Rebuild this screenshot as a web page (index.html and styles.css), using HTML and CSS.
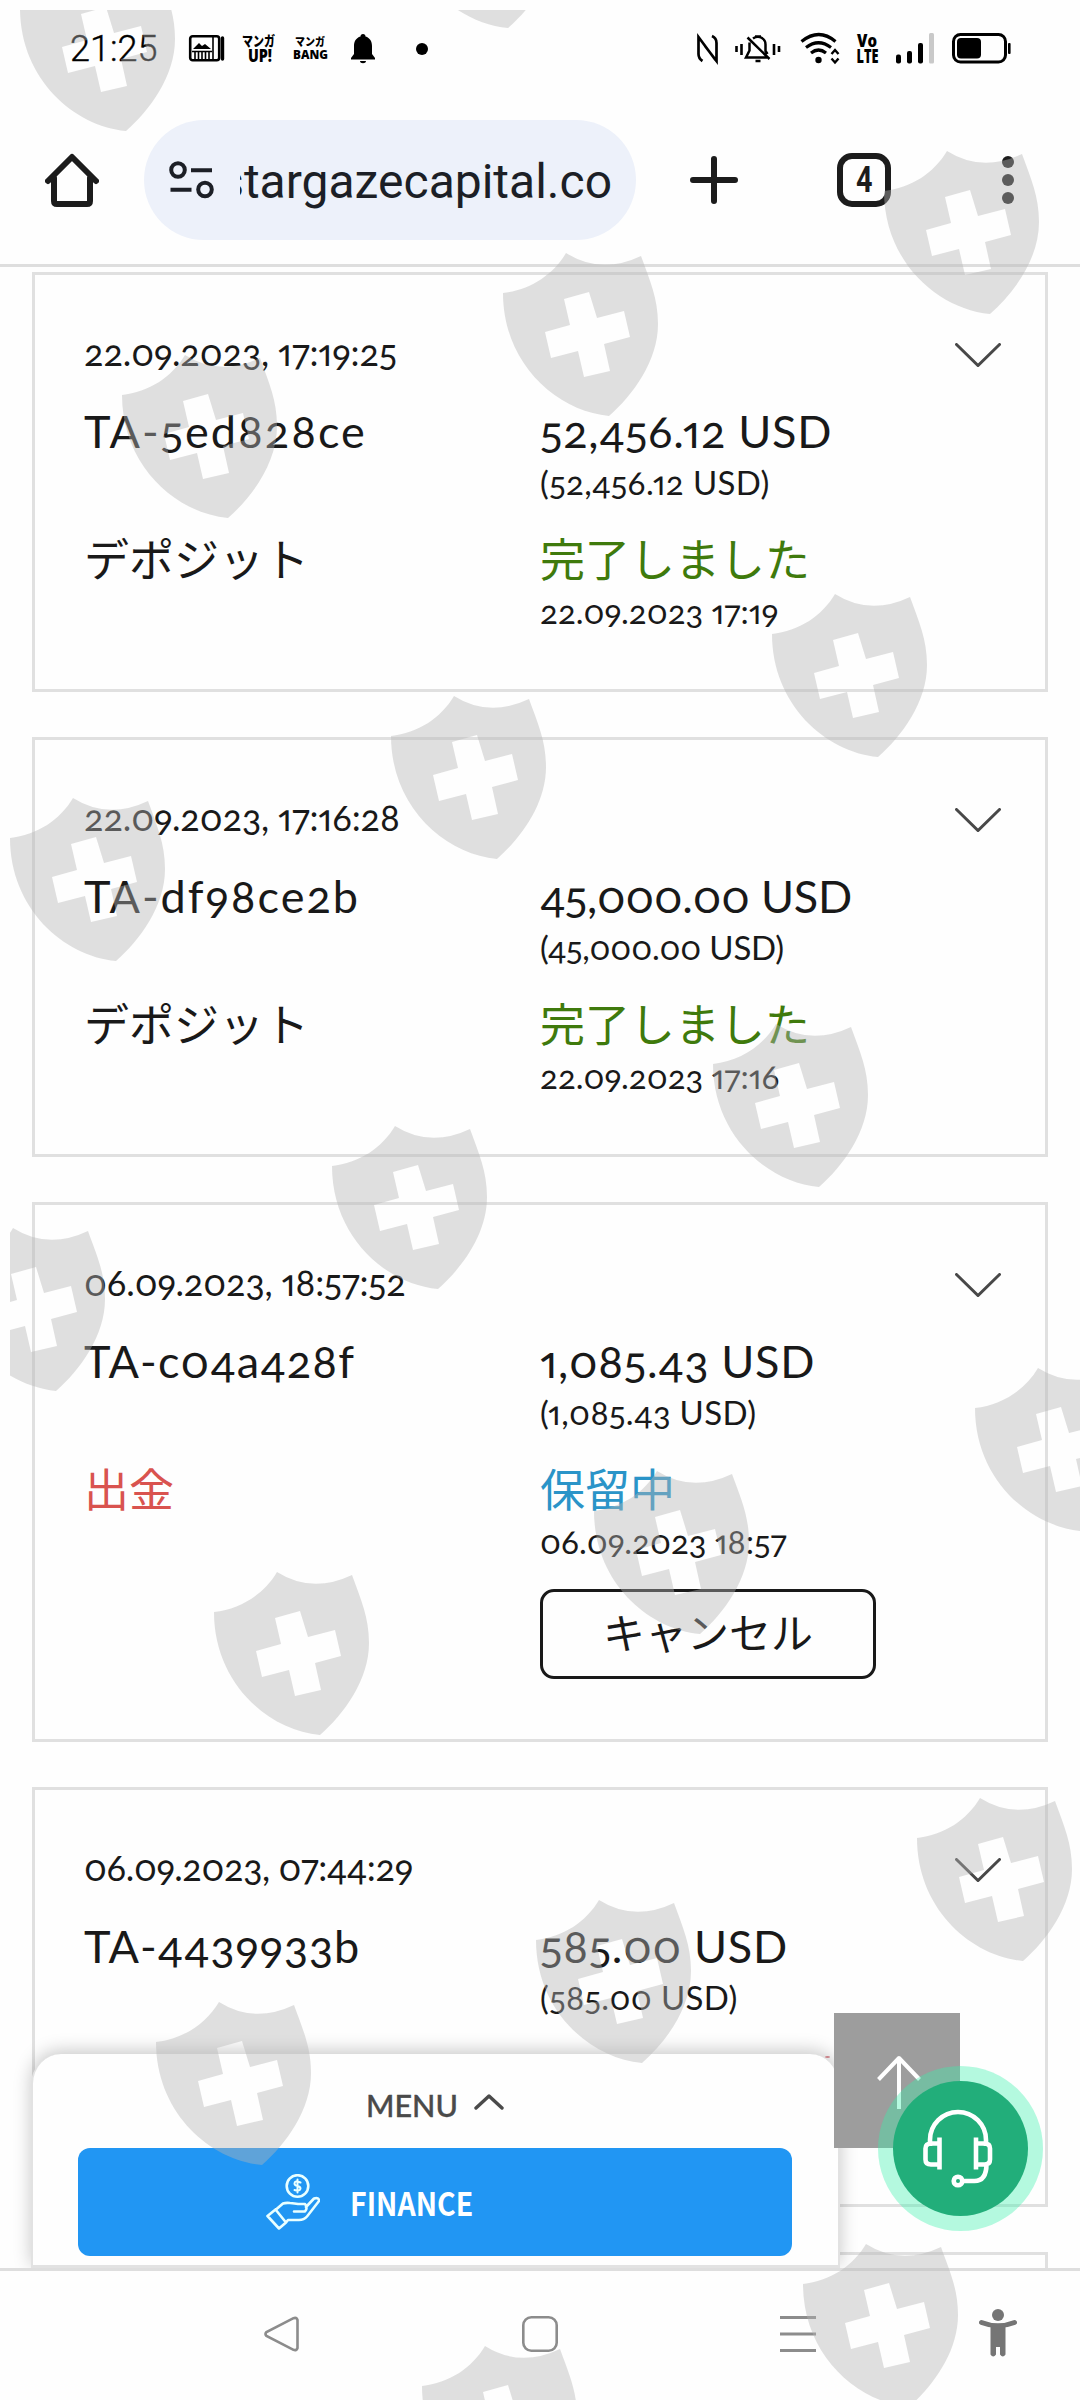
FILE: index.html
```html
<!DOCTYPE html>
<html lang="ja">
<head>
<meta charset="utf-8">
<title>Transactions</title>
<link rel="stylesheet" href="styles.css">
</head>
<body>
<div class="screen">
  <header class="status">
    <span class="clock">21:25</span>
    <svg class="st-news" width="36" height="27" viewBox="0 0 36 27"><rect x="1.2" y="1.2" width="29" height="24" rx="2.5" fill="none" stroke="#000" stroke-width="2.6"/><path d="M24 1v24" stroke="#000" stroke-width="1.6"/><path d="M33.5 3v21" stroke="#000" stroke-width="3.4" stroke-linecap="round"/><path d="M4 14l6-6 3 3 3-2 6 5z"/><path d="M3 16.500h20M6 17v7M9.500 17v7M13 17v7M16.500 17v7M20 17v7" stroke="#000" stroke-width="1.6"/></svg>
    <svg class="st-up" width="34" height="30" viewBox="0 0 34 30"><text class="jp-mini" x="0" y="12" textLength="33" lengthAdjust="spacingAndGlyphs" font-size="14">マンガ</text><text class="lat-mini" x="6" y="28" textLength="24" lengthAdjust="spacingAndGlyphs" font-size="17">UP!</text></svg>
    <svg class="st-bang" width="35" height="26" viewBox="0 0 35 26"><text class="jp-mini" x="2" y="10" textLength="30" lengthAdjust="spacingAndGlyphs" font-size="11">マンガ</text><text class="lat-mini" x="0" y="23" textLength="35" lengthAdjust="spacingAndGlyphs" font-size="12.500">BANG</text></svg>
    <svg class="st-bell" width="24" height="30" viewBox="0 0 24 30"><path d="M12 0c1.600 0 2.500 1 2.500 2.600C19 4 21 7.500 21 12v8l3 4v1.500H0V24l3-4v-8c0-4.500 2-8 6.500-9.400C9.500 1 10.400 0 12 0zM9 27h6c0 3-6 3-6 0z"/></svg>
    <span class="st-dot"></span>
    <svg class="st-nfc" width="22" height="29" viewBox="0 0 22 29" fill="none" stroke="#000" stroke-width="2.700"><path d="M6.500 27Q2.500 24.500 2.500 20V3l17 23M16 2q4.500 2 4.500 7v18L9 12"/></svg>
    <svg class="st-vib" width="46" height="30" viewBox="0 0 46 30" fill="none" stroke="#000" stroke-width="2.500"><path d="M1.500 12v6M6.500 10v11M39 10v11M44 12v6" stroke-width="2.600"/><path d="M14.500 8.500v8L11 23.500h21M18 4.500c6-4 12.500 0 12.500 6V17l2 3M12.500 3.500l22 21.500M20 2.500h6M20.500 27h5"/></svg>
    <svg class="st-wifi" width="42" height="31" viewBox="0 0 42 31" fill="none" stroke="#000" stroke-width="3.200"><path d="M1.500 8.500q17.500-14 34 0M6 14.500q12.500-9.500 25 0M11 20q7.500-6 15 0"/><circle cx="18.500" cy="27" r="3.200" fill="#000" stroke="none"/><path d="M31.500 21l3.500-4 3.500 4M31.500 25.500l3.500 4 3.500-4" stroke-width="2.400"/></svg>
    <svg class="st-volte" width="23" height="31" viewBox="0 0 23 31"><text class="lat-mini" x="1" y="14" textLength="20" lengthAdjust="spacingAndGlyphs" font-size="18">Vo</text><text class="lat-mini" x="0.500" y="30" textLength="22" lengthAdjust="spacingAndGlyphs" font-size="18.500">LTE</text></svg>
    <svg class="st-sig" width="39" height="31" viewBox="0 0 39 31"><rect y="21.500" width="5" height="9" rx="2"/><rect x="11" y="18" width="5" height="12.500" rx="2"/><rect x="22" y="10" width="5" height="20.500" rx="2"/><rect x="33" y="0" width="5" height="30.500" rx="1.500" fill="#c9c9c9"/></svg>
    <svg class="st-bat" width="60" height="31" viewBox="0 0 60 31"><rect x="1.500" y="1.500" width="52" height="27.500" rx="7" fill="none" stroke="#000" stroke-width="3"/><rect x="5" y="5" width="24" height="20.500" rx="4"/><rect x="56" y="10" width="2.600" height="11" rx="1"/></svg>
  </header>

  <div class="toolbar">
    <svg class="home" width="54" height="54" viewBox="0 0 54 54" fill="none" stroke="#1c1c1c" stroke-width="6" stroke-linejoin="round" stroke-linecap="round"><path d="M3 28L27 4l24 24M9 25v23q0 3 3 3h30q3 0 3-3V25"/></svg>
    <div class="omnibox">
      <svg width="46" height="40" viewBox="0 0 46 40" fill="none" stroke="#1c1f26" stroke-width="4"><circle cx="9" cy="10" r="6.800"/><circle cx="36" cy="29.500" r="6.800"/><path d="M22 10.300h21M1.500 29.700h21"/></svg>
      <div class="url"><span>stargazecapital.co</span></div>
    </div>
    <svg class="plus" width="48" height="50" viewBox="0 0 48 50" stroke="#1c1c1c" stroke-width="6" stroke-linecap="round"><path d="M3 25h42M24 4v42"/></svg>
    <div class="tabs"><span>4</span></div>
    <div class="dots"><i></i><i></i><i></i></div>
  </div>

  <main class="list">
    <article class="card">
      <div class="head"><span class="when">22.09.2023, 17:19:25</span><svg class="chev" width="46" height="24" viewBox="0 0 46 24"><path d="M1.500 1.500L23 22.500 44.500 1.500"/></svg></div>
      <div class="grid">
        <div class="big id">TA-5ed828ce</div>
        <div><div class="big">52,456.12 USD</div><div class="small">(52,456.12 USD)</div></div>
        <div class="ja">デポジット</div>
        <div><div class="ja done">完了しました</div><div class="small date">22.09.2023 17:19</div></div>
      </div>
    </article>
    <article class="card">
      <div class="head"><span class="when">22.09.2023, 17:16:28</span><svg class="chev" width="46" height="24" viewBox="0 0 46 24"><path d="M1.500 1.500L23 22.500 44.500 1.500"/></svg></div>
      <div class="grid">
        <div class="big id">TA-df98ce2b</div>
        <div><div class="big snug">45,000.00 USD</div><div class="small snug">(45,000.00 USD)</div></div>
        <div class="ja">デポジット</div>
        <div><div class="ja done">完了しました</div><div class="small date">22.09.2023 17:16</div></div>
      </div>
    </article>
    <article class="card tall">
      <div class="head"><span class="when">06.09.2023, 18:57:52</span><svg class="chev" width="46" height="24" viewBox="0 0 46 24"><path d="M1.500 1.500L23 22.500 44.500 1.500"/></svg></div>
      <div class="grid">
        <div class="big id numeric">TA-c04a428f</div>
        <div><div class="big">1,085.43 USD</div><div class="small">(1,085.43 USD)</div></div>
        <div class="ja out">出金</div>
        <div><div class="ja hold">保留中</div><div class="small date">06.09.2023 18:57</div><div class="cancel">キャンセル</div></div>
      </div>
    </article>
    <article class="card">
      <div class="head"><span class="when snug">06.09.2023, 07:44:29</span><svg class="chev" width="46" height="24" viewBox="0 0 46 24"><path d="M1.500 1.500L23 22.500 44.500 1.500"/></svg></div>
      <div class="grid">
        <div class="big id numeric">TA-4439933b</div>
        <div><div class="big">585.00 USD</div><div class="small">(585.00 USD)</div></div>
      </div>
    </article>
    <article class="card"></article>

    <section class="panel">
      <div class="menu"><span>MENU</span><svg width="30" height="17" viewBox="0 0 30 17"><path d="M2 15L15 3l13 12" fill="none" stroke="#4a4a4a" stroke-width="3.400" stroke-linecap="round" stroke-linejoin="round"/></svg></div>
      <div class="finance">
        <svg width="54" height="56" viewBox="0 0 54 56" fill="none" stroke="#e9ffff" stroke-width="2.600" stroke-linejoin="round" stroke-linecap="round"><circle cx="31.500" cy="12" r="10.800"/><path d="M1.500 42l8-6.500L20 48.500 13 54.500zM10 35.500l7-6q3-1 7-.5 5 .5 8 1h7q3 4 0 7.500H28M40 33l8-8.500q5-1.500 5 2.500L41 42.500q-3 3.500-8 3.500H22l-2 2.500"/><path d="M34.500 8.500q-6-2.500-6 1 0 2 3 2.500t3 2.800q-1 3-6 1.200M31.500 5.500v13" stroke-width="2"/></svg>
        <span>FINANCE</span>
      </div>
    </section>
    <i class="speck"></i>
    <div class="top-btn"><svg width="44" height="54" viewBox="0 0 44 54" fill="none" stroke="#fff" stroke-width="4" stroke-linejoin="round"><path d="M22 3v51M1.500 24.500L22 3l20.500 21.500"/></svg></div>
    <div class="support"><svg width="70" height="80" viewBox="0 0 70 80" fill="none" stroke="#fff" stroke-width="4.600" stroke-linejoin="round"><path d="M7 37V31a28 28 0 0 1 56 0v6M16.500 28.500v32M16.500 34.500H8q-5.500 0-5.500 5v11q0 5 5.500 5h8.500M53 28.500v32M53 34.500h8.500q5.500 0 5.500 5v11q0 5-5.500 5H53M63.500 55q0 17-12 17H41"/><circle cx="35" cy="72" r="4.300"/></svg></div>
  </main>

  <nav class="nav">
    <svg class="back" width="36" height="36" viewBox="0 0 36 36"><path d="M33.500 4v28q-1 3-4 1.800L2.500 20q-2-2 0-4L29.500 2.200q3-1.200 4 1.800z"/></svg>
    <svg class="sq" width="36" height="36" viewBox="0 0 36 36"><rect x="1.300" y="1.300" width="33.400" height="33.400" rx="8"/></svg>
    <svg class="lines" width="36" height="38" viewBox="0 0 36 38"><path d="M0 2.500h36M0 19h36M0 35.500h36"/></svg>
    <svg class="person" width="38" height="49" viewBox="0 0 38 49"><circle cx="19" cy="6" r="6"/><path d="M2.500 13.500Q19 20 35.500 13.500" fill="none" stroke="#757575" stroke-width="5" stroke-linecap="round"/><path d="M11.500 16h15v29.500q-2.700 4-5.500 0V38h-4v7.500q-2.800 4-5.500 0z"/></svg>
  </nav>

  <svg class="marks" width="1070" height="2390" viewBox="10 10 1070 2390">
    <defs><path id="shield" fill-rule="evenodd" d="M0 0Q35 22 75 3C84 28 92 45 92 71C92 108 67 142 43 163C-10 158-63 110-63 40C-36 37-13 22 0 0zM-2 46L4 72-21 79-15 105 12 98 18 124 44 118 38 91 64 84 58 58 31 65 23 39z"/></defs>
    <use href="#shield" x="83" y="-32"/><use href="#shield" x="465" y="-135"/>
    <use href="#shield" x="947" y="151"/><use href="#shield" x="566" y="253"/><use href="#shield" x="185" y="355"/>
    <use href="#shield" x="835" y="594"/><use href="#shield" x="454" y="696"/><use href="#shield" x="73" y="798"/>
    <use href="#shield" x="776" y="1024"/><use href="#shield" x="395" y="1126"/><use href="#shield" x="13" y="1228"/>
    <use href="#shield" x="1038" y="1368"/><use href="#shield" x="657" y="1471"/><use href="#shield" x="277" y="1572"/>
    <use href="#shield" x="980" y="1798"/><use href="#shield" x="599" y="1900"/><use href="#shield" x="219" y="2002"/>
    <use href="#shield" x="866" y="2244"/><use href="#shield" x="485" y="2346"/>
  </svg>
</div>
</body>
</html>
```
FILE: styles.css
```css
* { box-sizing: border-box; }
body { margin: 0; background: #fefefe; }
svg { display: block; flex: none; }
.screen { position: relative; width: 1080px; height: 2400px; overflow: hidden; display: flex; flex-direction: column; color: #191919; }

.status { height: 97px; display: flex; align-items: center; padding-left: 70px; flex: none; }
.status svg { overflow: visible; }
.clock { font: 300 36px/36px Roboto, sans-serif; color: #000; width: 119px; -webkit-text-stroke: .4px #000; }
.st-up { margin-left: 17px; }
.st-bang { margin-left: 17px; }
.st-bell { margin-left: 23px; }
.st-dot { width: 12px; height: 12px; border-radius: 50%; background: #000; margin-left: 41px; }
.st-nfc { margin-left: 268px; }
.st-vib { margin-left: 17px; }
.st-wifi { margin-left: 19px; }
.st-volte { margin-left: 14px; }
.st-sig { margin-left: 17px; }
.st-bat { margin-left: 17px; }
.jp-mini { font-family: "Noto Sans CJK JP", sans-serif; font-weight: 900; }
.lat-mini { font-family: "Open Sans", sans-serif; font-weight: 800; }

.toolbar { height: 170px; padding: 23px 0 24px 45px; display: flex; align-items: center; border-bottom: 3px solid #dedede; flex: none; }
.omnibox { margin-left: 45px; width: 492px; height: 120px; border-radius: 60px; background: #edf1fa; display: flex; align-items: center; padding-left: 25px; }
.url { margin-left: 25px; width: 372px; overflow: hidden; display: flex; justify-content: flex-end; font: 48px/60px Roboto, sans-serif; color: #1c1f26; padding-top: 4px; }
.plus { margin-left: 54px; }
.tabs { margin-left: 99px; width: 54px; height: 54px; border: 6px solid #1c1c1c; border-radius: 15px; font: bold 36px/43px Roboto, sans-serif; text-align: center; color: #1c1c1c; }
.tabs span { display: inline-block; transform: scaleX(.8); }
.dots { margin-left: 111px; display: flex; flex-direction: column; gap: 6px; }
.dots i { width: 12px; height: 12px; border-radius: 50%; background: #1c1c1c; }

.list { position: relative; height: 2004px; overflow: hidden; padding: 5px 32px 0; flex: none; border-bottom: 3px solid #dedede; }
.card { height: 420px; margin-bottom: 45px; border: 3px solid #e0e0e0; padding: 56px 44px 0 49px; font-family: Lato, "Noto Sans CJK JP", sans-serif; font-feature-settings: "onum", "pnum"; }
.card.tall { height: 540px; }
.head { display: flex; justify-content: space-between; align-items: center; height: 48px; }
.when { font-size: 36px; line-height: 42px; padding-bottom: 7px; letter-spacing: -.1px; }
.when.snug { letter-spacing: -.35px; }
.chev { fill: none; stroke: #484848; stroke-width: 3; stroke-linecap: round; }
.grid { display: grid; grid-template-columns: 456px 1fr; row-gap: 21px; margin-top: 22px; }
.big { font-size: 45px; line-height: 60px; letter-spacing: .7px; }
.big.id { letter-spacing: 2px; }
.big.id.numeric { letter-spacing: 1.1px; }
.small { font-size: 33px; line-height: 42px; letter-spacing: .35px; white-space: nowrap; }
.big.snug, .small.snug { letter-spacing: -.2px; }
.ja { font: 45px/68px "Noto Sans CJK JP", sans-serif; }
.small.date { line-height: 38px; letter-spacing: 0; }
.done { color: #3f7a0c; }
.out { color: #d9534f; }
.hold { color: #2a94c8; }
.cancel { width: 336px; height: 90px; border: 3px solid #191919; border-radius: 14px; margin-top: 29px; text-align: center; font: 42px/78px "Noto Sans CJK JP", sans-serif; }

.panel { position: absolute; left: 31px; top: 1787px; width: 809px; height: 214px; border-radius: 30px 30px 0 0; background: #fefefe; border: solid #e2e2e2; border-width: 0 2px 3px 2px; box-shadow: 0 -3px 18px rgba(0, 0, 0, .22); padding: 38px 46px 0 45px; }
.menu { height: 56px; display: flex; justify-content: center; gap: 16px; font: 500 30.500px/24px Lato, sans-serif; color: #4a4a4a; padding-top: 1px; -webkit-text-stroke: .4px #4a4a4a; }
.finance { height: 108px; border-radius: 12px; background: #2196f3; display: flex; align-items: center; padding-left: 188px; gap: 30px; color: #fff; font: 700 32px/48px "Noto Sans CJK JP", sans-serif; }
.finance span { transform: scaleX(.89); transform-origin: 0 50%; }
.speck { position: absolute; left: 825px; top: 1789px; width: 5px; height: 2px; border-radius: 50%; background: #c98088; }
.top-btn { position: absolute; left: 834px; top: 1746px; width: 126px; height: 135px; background: #9d9d9d; padding: 42px 0 0 43px; }
.support { position: absolute; left: 893px; top: 1814px; width: 135px; height: 135px; border-radius: 50%; background: #22ae7a; box-shadow: 0 0 0 15px rgba(55, 241, 171, .37); padding: 28px 0 0 30px; }

.nav { flex: 1; display: flex; align-items: center; padding: 0 0 4px 264px; fill: none; stroke: #8c8c8c; stroke-width: 2.600; }
.sq { margin-left: 222px; }
.lines { margin-left: 222px; stroke-width: 3; }
.person { margin-left: 163px; fill: #757575; stroke: none; }

.marks { position: absolute; left: 10px; top: 10px; overflow: hidden; fill: rgba(181, 181, 181, .42); pointer-events: none; }
```
